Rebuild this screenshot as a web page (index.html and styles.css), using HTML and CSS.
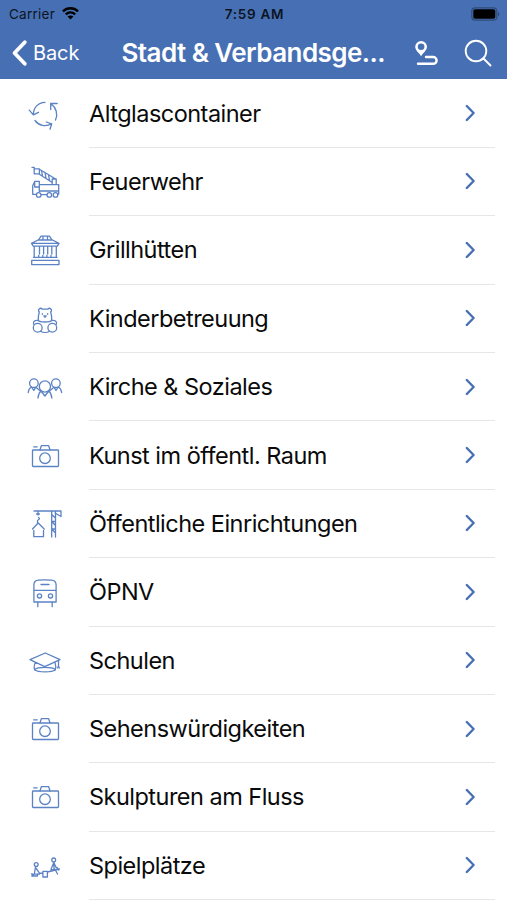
FILE: index.html
```html
<!DOCTYPE html>
<html lang="de">
<head>
    <meta charset="UTF-8">
    <meta name="viewport" content="width=device-width, initial-scale=1.0">
    <title>Stadt &amp; Verbandsgemeinde</title>
    <link rel="stylesheet" href="styles.css">
</head>
<body>
    <svg class="sprite" xmlns="http://www.w3.org/2000/svg">
        <symbol id="chevron" viewBox="0 0 12 20">
            <path d="M2.800 3 9.600 10 2.800 17"/>
        </symbol>
        <symbol id="glass" viewBox="0 0 48 48">
            <path d="M24 12.3C17 12.5 12.5 17.500 12.300 24.800M8.300 20.100l4 4.700 5.200-2.500M29.700 13.500c5.500 4 7.500 10.500 4.800 16.600M29.700 19.500v-6h6.500M14 30.500c4 5.300 10.500 6.800 16.700 3.300M25.300 32l5.400 1.800-1.700 5.400"/>
        </symbol>
        <symbol id="fire" viewBox="0 0 48 48">
            <path d="M11 9.300h2.200v6.500h5.200v-5h-5.200M18.400 11.200l16.300 9.800M18.400 16.200l12.800 8.300M20.500 12.500l1 5.500M24 14.500l1 5.500M27.500 16.800l1 5.500M31.200 21h4v5.700h-4zM18.300 26.700h19.400v9.500h-.8M18.300 33.500V23.300h-4.500l-2.100 4.500v8.500h3.500M13.700 24.500v4.500h4M20.500 36.700h5.200M18.300 33h19.400"/>
            <circle cx="17.700" cy="36.900" r="2.300"/>
            <circle cx="28.300" cy="36.900" r="2.300"/>
            <circle cx="34.500" cy="36.900" r="2.300"/>
        </symbol>
        <symbol id="grill" viewBox="0 0 48 48">
            <path d="M17.500 14l2.500-3.800h8.500l2.500 3.800M17 14h14.500l6.500 3.300-1.700 2.900h-24L10.500 17.300zM12 17.400h24.500M22 10.500v3.500M26.500 10.500v3.500M13.200 20.500v10.500M18.500 20.500v7.500M17.700 29.500v1M22.600 20.500v7.500M21.800 29.500v1M26.700 20.500v7.500M25.900 29.500v1M30.800 20.500v7.500M30 29.500v1M35.300 20.500v10.500M12.500 31.300h23.600M10.700 34.300h27.300v4.300H10.700z"/>
        </symbol>
        <symbol id="bear" viewBox="0 0 48 48">
            <path d="M18.300 17c-2.300-2.300 1-5 3-2.800h5.400c2-2.200 5.300.5 3 2.800.8 2.500 1.300 5.500 1 8.500-1.800 2-11.600 2-13.400 0-.3-3 .2-6 1-8.500zM17.300 25.500c-3.700-.5-5.700 1.200-4.500 4M30.700 25.500c3.700-.5 5.700 1.200 4.500 4M19.500 36.200c2.500 1.500 6.700 1.500 9.200 0M22.800 21h2.400M24 21v1.500M21.300 18.700v.6M26.700 18.700v.6"/>
            <circle cx="16.700" cy="32.800" r="4.400"/>
            <circle cx="31.300" cy="32.800" r="4.400"/>
        </symbol>
        <symbol id="people" viewBox="0 0 48 48">
            <circle cx="23.900" cy="23.500" r="5.600"/>
            <circle cx="12.900" cy="20.200" r="4.300"/>
            <circle cx="34.900" cy="20.200" r="4.300"/>
            <path d="M10.500 24c-2 1-3 3-3.300 5.500M10.500 24l2.300 3.500 2-3.300 4 3.300M37.300 24c2 1 3 3 3.300 5.500M37.300 24L35 27.500l-2-3.300-4 3.300M20 28c-1.800 1.500-2.700 4-3 7M20 28l3.900 5 3.900-5c1.800 1.500 2.700 4 3 7"/>
        </symbol>
        <symbol id="camera" viewBox="0 0 48 48">
            <rect x="11.500" y="18" width="26" height="16.500" rx=".8"/>
            <path d="M19 18l1.300-4.300h7.400L29 18M12.700 14.800h3.500"/>
            <circle cx="24" cy="26.200" r="5.300"/>
        </symbol>
        <symbol id="crane" viewBox="0 0 48 48">
            <path d="M13 11h27v5.500l-6-3.500M30.700 11v26M34.500 11v26M30.700 14.500l3.800 3.500M34.500 21.500h-3.800l3.800 4M34.500 29h-3.800l3.800 4M17 11v4M15.500 14h3M17.500 17.500c2 1 0 2.500-1 3v2.500M11.500 29l5.700-6 6 6M12.800 30.500v6.200h9.700v-6.200"/>
        </symbol>
        <symbol id="bus" viewBox="0 0 48 48">
            <path d="M12.900 34V17c0-3 1.500-4.600 4.500-4.800 4-.3 9-.3 13 0 3 .2 4.700 1.800 4.700 4.800v17zM12.900 22.300h22.200M20 16.500h8M16.800 34v4.700M31.200 34v4.700"/>
            <circle cx="18.500" cy="27.900" r="2.100"/>
            <circle cx="29.500" cy="27.900" r="2.100"/>
        </symbol>
        <symbol id="school" viewBox="0 0 48 48">
            <path d="M9 22.600L24.300 16 39 22.600l-15.300 7zM14.500 25.300c-1.500 3-1.500 6-.7 7.700 3.500 2.500 17 2.500 20.500 0 .8-2 .5-5-.3-7.700M14 32.500c2.500-2.800 17.500-2.800 20 0M37.500 23.500v5.500M36.700 31l.8-2 .8 2"/>
        </symbol>
        <symbol id="play" viewBox="0 0 48 48">
            <circle cx="15.200" cy="22.500" r="1.900"/>
            <circle cx="32.700" cy="17.900" r="1.900"/>
            <path d="M14.500 25l-1.200 7 5.200.2M14.500 25.500l3.800 5.300M13.300 32l-2.500 2h5.700v-2M10.500 32l2 .5M18.300 31.300l3.500-.3M26.500 30l12-3M21.900 29.300h4.500V35h-4.500zM32.800 20.500l-2.700 6.500M32.800 20.500l2.500 5.500M33 22.500v4.500M30 27.800l4-.5 2.500 4.700M36 25.500l1.800 2.500"/>
        </symbol>
    </svg>

    <header class="header">
        <div class="status-bar">
            <div class="carrier">
                <span>Carrier</span>
                <svg class="wifi" viewBox="0 0 20 15">
                    <path d="M2 5.200c4.600-4.300 11.400-4.300 16 0M5 8.400c3-2.700 7-2.700 10 0"/>
                    <path class="dot" d="M6.900 10.700c1.800-1.500 4.400-1.500 6.200 0L10 13.900z"/>
                </svg>
            </div>
            <span class="time">7:59 AM</span>
            <svg class="battery" viewBox="0 0 29 14">
                <rect class="shell" x=".8" y=".8" width="25" height="12.400" rx="3.500"/>
                <rect x="2.300" y="2.300" width="22" height="9.400" rx="1.800"/>
                <path class="shell-tip" d="M27 4.700c1.800.8 1.800 3.800 0 4.600z"/>
            </svg>
        </div>
        <nav class="nav-bar">
            <a class="back">
                <svg class="back-icon" viewBox="0 0 18 28"><path d="M14.800 3.200L4.500 14l10.300 10.800"/></svg>
                <span>Back</span>
            </a>
            <h1>Stadt &amp; Verbandsge...</h1>
            <svg class="route-icon" viewBox="0 0 26 28">
                <path d="M8.100 17.200C6.200 14 2.200 11.500 2.200 7.800a5.900 5.900 0 0 1 11.800 0c0 3.700-4 6.200-5.900 9.400z"/>
                <circle cx="8.100" cy="7.700" r="3.300" class="hole"/>
                <path class="road" d="M13 18h7.200a3.400 3.400 0 0 1 0 6.800H5"/>
            </svg>
            <svg class="search-icon" viewBox="0 0 30 30">
                <circle cx="13" cy="13" r="10.300"/>
                <path d="M20.500 20.500l7 7"/>
            </svg>
        </nav>
    </header>

    <ul class="list">
        <li><svg class="icon"><use href="#glass"/></svg><div class="row"><span>Altglascontainer</span><svg class="chevron"><use href="#chevron"/></svg></div></li>
        <li><svg class="icon"><use href="#fire"/></svg><div class="row"><span>Feuerwehr</span><svg class="chevron"><use href="#chevron"/></svg></div></li>
        <li><svg class="icon"><use href="#grill"/></svg><div class="row"><span>Grillhütten</span><svg class="chevron"><use href="#chevron"/></svg></div></li>
        <li><svg class="icon"><use href="#bear"/></svg><div class="row"><span>Kinderbetreuung</span><svg class="chevron"><use href="#chevron"/></svg></div></li>
        <li><svg class="icon"><use href="#people"/></svg><div class="row"><span>Kirche &amp; Soziales</span><svg class="chevron"><use href="#chevron"/></svg></div></li>
        <li><svg class="icon"><use href="#camera"/></svg><div class="row"><span>Kunst im öffentl. Raum</span><svg class="chevron"><use href="#chevron"/></svg></div></li>
        <li><svg class="icon"><use href="#crane"/></svg><div class="row"><span>Öffentliche Einrichtungen</span><svg class="chevron"><use href="#chevron"/></svg></div></li>
        <li><svg class="icon"><use href="#bus"/></svg><div class="row"><span>ÖPNV</span><svg class="chevron"><use href="#chevron"/></svg></div></li>
        <li><svg class="icon"><use href="#school"/></svg><div class="row"><span>Schulen</span><svg class="chevron"><use href="#chevron"/></svg></div></li>
        <li><svg class="icon"><use href="#camera"/></svg><div class="row"><span>Sehenswürdigkeiten</span><svg class="chevron"><use href="#chevron"/></svg></div></li>
        <li><svg class="icon"><use href="#camera"/></svg><div class="row"><span>Skulpturen am Fluss</span><svg class="chevron"><use href="#chevron"/></svg></div></li>
        <li><svg class="icon"><use href="#play"/></svg><div class="row"><span>Spielplätze</span><svg class="chevron"><use href="#chevron"/></svg></div></li>
    </ul>
</body>
</html>
```
FILE: styles.css
```css
* {
    margin: 0;
    padding: 0;
    box-sizing: border-box;
}

body {
    height: 900px;
    overflow: hidden;
    background-color: #fff;
    color: #0a0a0a;
    font-family: Inter, "Liberation Sans", sans-serif;
}

svg {
    flex-shrink: 0;
    fill: none;
    stroke-linecap: round;
    stroke-linejoin: round;
}

.sprite {
    display: none;
}

.header {
    height: 79.4px;
    background-color: #4770b4;
}

.status-bar {
    display: grid;
    grid-template-columns: 1fr auto 1fr;
    align-items: center;
    height: 27px;
    padding: 0 7px 0 9px;
    color: #0c1422;
    font-size: 13.5px;
}

.carrier {
    display: flex;
    align-items: center;
    gap: 6px;
    letter-spacing: 0.25px;
}

.wifi {
    width: 19px;
    height: 15px;
    stroke: #000;
    stroke-width: 2.4;
    stroke-linecap: butt;
}

.wifi .dot {
    fill: #000;
    stroke: none;
}

.time {
    font-weight: 600;
    font-size: 13.5px;
    letter-spacing: 0.7px;
}

.battery {
    justify-self: end;
    width: 29px;
    height: 14px;
    fill: #000;
}

.battery .shell {
    fill: none;
    stroke: #2f4b79;
    stroke-width: 1.2;
}

.battery .shell-tip {
    fill: #2f4b79;
}

.nav-bar {
    display: flex;
    align-items: center;
    height: 51px;
    padding: 0 14px 0 10px;
    color: #fff;
}

.nav-bar svg {
    stroke: #fff;
}

.back {
    display: flex;
    align-items: center;
    gap: 5px;
    width: 111.5px;
    font-size: 20px;
    letter-spacing: -0.1px;
}

.back-icon {
    width: 18px;
    height: 28px;
    stroke-width: 3.8;
}

h1 {
    width: 291.5px;
    font-size: 26px;
    font-weight: 600;
    letter-spacing: -0.55px;
    white-space: nowrap;
}

.route-icon {
    width: 26px;
    height: 28px;
    margin-right: 24px;
}

.route-icon path {
    fill: #fff;
    stroke: none;
}

.route-icon .hole {
    fill: #4770b4;
    stroke: none;
}

.nav-bar .route-icon .road {
    fill: none;
    stroke: #fff;
    stroke-width: 2.4;
}

.search-icon {
    width: 30px;
    height: 30px;
    stroke-width: 1.9;
}

.list {
    list-style: none;
}

.list li {
    display: flex;
    align-items: center;
    height: 68.4px;
    padding: 0 12px 0 21px;
}

.icon {
    width: 48px;
    height: 48px;
    margin-right: 20px;
    stroke: #5b82c4;
    stroke-width: 1.3;
}

.row {
    flex: 1;
    display: flex;
    align-items: center;
    justify-content: space-between;
    height: 100%;
    padding-right: 19px;
    border-bottom: 1px solid #e6e6e6;
    font-size: 23.5px;
    letter-spacing: -0.52px;
}

.chevron {
    width: 12px;
    height: 20px;
    stroke: #4770b4;
    stroke-width: 2.4;
}
```
